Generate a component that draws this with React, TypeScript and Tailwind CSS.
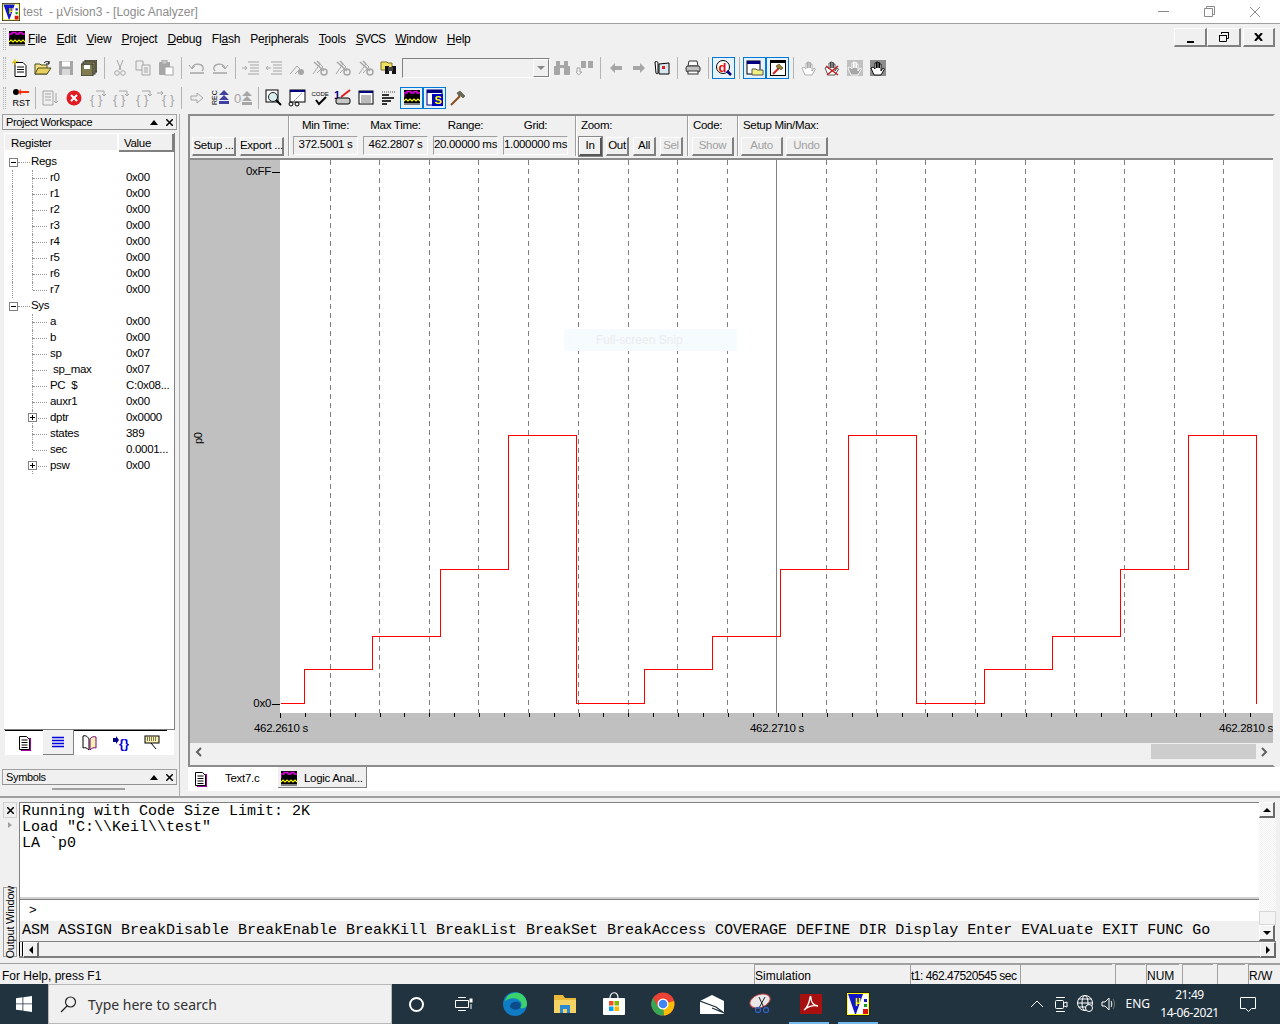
import React from 'react';

const G = '#a6a6a6';

const LaIcon = ({ size = 16 }: { size?: number }) => (
  <svg width={size} height={size} viewBox="0 0 16 16">
    <rect x="0" y="0" width="16" height="15" fill="#000" />
    <path d="M0 6V2h3V0.5h4V2h3V.5h3V2h3" transform="translate(0 1)" fill="none" stroke="#e000e0" strokeWidth="1.4" />
    <path d="M0 11l2-2 2 2 2-2 2 2 2-2 2 2 2-2 2 2" fill="none" stroke="#ffff00" strokeWidth="1.2" />
    <rect x="0" y="13.5" width="16" height="1" fill="#fff" />
  </svg>
);

const SymIcon = () => (
  <svg width="18" height="18" viewBox="0 0 18 18">
    <rect x="1" y="1" width="15" height="15" fill="#fff" stroke="#000080" />
    <rect x="1" y="1" width="15" height="3" fill="#000080" />
    <rect x="6" y="5" width="11" height="12" fill="#0000c0" />
    <text x="8.5" y="15" fontSize="11" fontWeight="700" fill="#ffff00" fontFamily="Liberation Sans">S</text>
  </svg>
);

const Hammer = () => (
  <svg width="18" height="18" viewBox="0 0 18 18">
    <path d="M2 16L11 7" stroke="#8a4b1a" strokeWidth="2" />
    <path d="M8 4l3-2 5 5-2 2-3-3-1 1z" fill="#6b6b4f" stroke="#333" strokeWidth=".5" />
  </svg>
);

const Doc = () => (
  <svg width="16" height="17" viewBox="0 0 16 17">
    <path d="M4 3h10v13H4z" fill="#a000a0" />
    <path d="M2.500 1.500h7l3 3v10h-10z" fill="#fff" stroke="#000" />
    <path d="M4.500 5h6M4.500 7.500h6M4.500 10h6M4.500 12.500h6" stroke="#000" />
  </svg>
);

const Floppy = ({ c = G, window: w = '#fff' }: { c?: string; window?: string }) => (
  <svg width="16" height="16" viewBox="0 0 16 16">
    <rect x="1" y="1" width="14" height="14" fill={c} />
    <rect x="4" y="1.500" width="8" height="5" fill={w} />
    <rect x="4" y="9" width="8" height="6" fill="#d8d8d8" />
  </svg>
);

const Lines = ({ arrow }: { arrow: 'r' | 'l' }) => (
  <svg width="18" height="16" viewBox="0 0 18 16">
    <path d="M6 2h11M8 5h9M8 8h9M8 11h9M6 14h11" stroke={G} />
    <path d={arrow === 'r' ? 'M0 8h5M3 6l2 2-2 2' : 'M6 8H1M3 6L1 8l2 2'} stroke={G} fill="none" />
  </svg>
);

const Mark = () => (
  <svg width="18" height="18" viewBox="0 0 18 18">
    <path d="M2 15L9 5l3 3-6 6" fill="none" stroke={G} />
    <circle cx="13" cy="13" r="3" fill="none" stroke={G} strokeWidth="1.500" />
    <path d="M6 2l3 3M3 3l10 9" stroke={G} strokeWidth="1.500" />
  </svg>
);

const Arc = ({ flip }: { flip?: boolean }) => (
  <svg width="18" height="16" viewBox="0 0 18 16" className={flip ? '-scale-x-100' : ''}>
    <path d="M4 8c2-5 9-5 11-1 1 2 0 3-1 4" fill="none" stroke={G} strokeWidth="1.300" />
    <path d="M1 5l3 4 3-3" fill="none" stroke={G} />
    <path d="M2 13h14" stroke={G} strokeWidth="1.500" />
  </svg>
);

const Brace = ({ pre, post }: { pre?: boolean; post?: boolean }) => (
  <svg width="18" height="18" viewBox="0 0 18 18">
    <text x={pre ? 5 : 2} y="15" fontSize="13" fill={G} fontFamily="Liberation Sans">{'{ }'}</text>
    {pre && <path d="M0 4h6M4 2l2 2-2 2" stroke={G} fill="none" />}
    {post && <path d="M8 2h8v5M14 5l2 2 2-2" stroke={G} fill="none" />}
  </svg>
);

const Hand = ({ c = '#000', fill = '#fff', bg, x }: { c?: string; fill?: string; bg?: string; x?: boolean }) => (
  <svg width="16" height="16" viewBox="0 0 16 16">
    {bg && <rect width="16" height="16" fill={bg} />}
    <path d="M4 15L1 8l2-1 2 2V3h1.500v5-6H8v6-5.500h1.500V8V4H11v7l2-3 1.500 1L11 15z" fill={fill} stroke={c} strokeWidth=".9" />
    {x && <path d="M2 6l12 9M14 6L3 15" stroke="#c02020" strokeWidth="1.500" />}
  </svg>
);

const toolbarIcons: Record<string, React.ReactNode> = {
  fresh: (
    <svg width="16" height="18" viewBox="0 0 16 18">
      <path d="M3 3.500h8l3 3v11H3z" fill="#fff" stroke="#000" />
      <path d="M5 8h7M5 10.500h7M5 13h7" stroke="#000" />
      <path d="M1 2l3 2M3 0v6M0 4l6-2" stroke="#e0c000" />
    </svg>
  ),
  open: (
    <svg width="18" height="16" viewBox="0 0 18 16">
      <path d="M1 14V4h5l1 1h6v9z" fill="#f0e080" stroke="#4a4a20" />
      <path d="M1 14l3-6h13l-4 6z" fill="#e8d060" stroke="#4a4a20" />
      <path d="M10 3c2-2 4-2 5 0M15 1v3h-3" fill="none" stroke="#000" />
    </svg>
  ),
  save: <Floppy />,
  saveAll: (
    <svg width="16" height="16" viewBox="0 0 16 16">
      <rect x="4" y="0" width="12" height="12" fill="#807c50" stroke="#333" />
      <rect x="2" y="2" width="12" height="12" fill="#9c9860" stroke="#333" />
      <rect x="0" y="4" width="12" height="12" fill="#807c50" stroke="#333" />
      <rect x="3" y="5" width="6" height="4" fill="#fff" />
    </svg>
  ),
  cut: (
    <svg width="14" height="16" viewBox="0 0 14 16">
      <path d="M4 0l4 10M10 0L6 10" stroke={G} />
      <circle cx="4" cy="13" r="2.300" fill="none" stroke={G} />
      <circle cx="10" cy="13" r="2.300" fill="none" stroke={G} />
    </svg>
  ),
  copy: (
    <svg width="16" height="16" viewBox="0 0 16 16">
      <path d="M1 1h7v9H1z" fill="#eee" stroke={G} />
      <path d="M7 5h8v10H7z" fill="#eee" stroke={G} />
      <path d="M9 8h4M9 10h4M9 12h4" stroke={G} />
    </svg>
  ),
  paste: (
    <svg width="16" height="16" viewBox="0 0 16 16">
      <rect x="1" y="2" width="11" height="13" rx="1" fill={G} />
      <rect x="4" y="0" width="5" height="4" fill="#c8c8c8" stroke={G} />
      <rect x="7" y="7" width="8" height="8" fill="#fff" stroke={G} />
    </svg>
  ),
  undo: <Arc />,
  redo: <Arc flip />,
  indent: <Lines arrow="r" />,
  outdent: <Lines arrow="l" />,
  mark: (
    <svg width="16" height="16" viewBox="0 0 16 16">
      <path d="M1 14L8 6l3 3-5 5" fill="none" stroke={G} />
      <circle cx="12" cy="12" r="3" fill={G} />
    </svg>
  ),
  markNext: <Mark />,
  markPrev: <Mark />,
  markClear: <Mark />,
  findFiles: (
    <svg width="18" height="16" viewBox="0 0 18 16">
      <path d="M1 2h6l1 1h4v7H1z" fill="#f0e060" stroke="#807020" />
      <rect x="5" y="6" width="4" height="8" fill="#111" />
      <rect x="12" y="6" width="4" height="8" fill="#111" />
      <rect x="8" y="7" width="5" height="4" fill="#444" />
    </svg>
  ),
  binoculars: (
    <svg width="18" height="16" viewBox="0 0 18 16">
      <rect x="1" y="6" width="6" height="9" rx="1" fill={G} />
      <rect x="11" y="6" width="6" height="9" rx="1" fill={G} />
      <rect x="3" y="1" width="4" height="6" fill={G} />
      <rect x="11" y="1" width="4" height="6" fill={G} />
      <rect x="7" y="5" width="4" height="3" fill={G} />
    </svg>
  ),
  binocularsDown: (
    <svg width="18" height="16" viewBox="0 0 18 16">
      <rect x="5" y="1" width="5" height="7" fill={G} />
      <rect x="12" y="1" width="5" height="7" fill={G} />
      <path d="M1 8h3v4h2l-3.500 3L0 12h1z" fill="none" stroke={G} />
    </svg>
  ),
  left: <svg width="14" height="12" viewBox="0 0 14 12"><path d="M6 1L1 6l5 5V8h7V4H6z" fill={G} /></svg>,
  right: <svg width="14" height="12" viewBox="0 0 14 12"><path d="M8 1l5 5-5 5V8H1V4h7z" fill={G} /></svg>,
  book: (
    <svg width="16" height="16" viewBox="0 0 16 16">
      <path d="M1 2c2-1 3 0 3 1v10c0 1-2 1-2 0z" fill="#fff" stroke="#000" />
      <path d="M5 4l10-1v11H5z" fill="#d8e8f0" stroke="#000" />
      <rect x="8" y="6" width="3" height="3" fill="#e02020" />
    </svg>
  ),
  print: (
    <svg width="16" height="16" viewBox="0 0 16 16">
      <path d="M4 1h8l1 5H3z" fill="#fff" stroke="#333" />
      <rect x="1" y="6" width="14" height="6" rx="2" fill="#c0c0c0" stroke="#333" />
      <rect x="3" y="11" width="10" height="3" fill="#fff" stroke="#333" />
    </svg>
  ),
  debug: (
    <svg width="18" height="18" viewBox="0 0 18 18">
      <circle cx="8" cy="8" r="6.500" fill="#fff" stroke="#000" />
      <text x="3.500" y="13" fontSize="13" fontWeight="700" fill="#e01010" fontFamily="Liberation Sans">d</text>
      <path d="M12 12l4 4" stroke="#000080" strokeWidth="2.500" />
    </svg>
  ),
  project: (
    <svg width="18" height="16" viewBox="0 0 18 16">
      <rect x="1" y="1" width="13" height="13" fill="#fff" stroke="#000" />
      <rect x="1" y="1" width="13" height="3" fill="#000080" />
      <path d="M6 9h4l1 1h6v5H6z" fill="#f0f080" stroke="#555" />
    </svg>
  ),
  build: (
    <svg width="16" height="16" viewBox="0 0 16 16">
      <rect x=".5" y=".5" width="15" height="15" fill="#fff" stroke="#000" />
      <rect x="0" y="0" width="16" height="3" fill="#000" />
      <path d="M3 14l6-6" stroke="#e02020" strokeWidth="2" />
      <path d="M6 6l3-2 4 4-2 2-2-2-1 1z" fill="#a08830" stroke="#222" strokeWidth=".5" />
    </svg>
  ),
  hand: <Hand c={G} />,
  handOff: <Hand c="#444" x />,
  handGray: <Hand c="#fff" fill={G} bg="#c0c0c0" />,
  handDark: <Hand bg="#8c8c8c" />,
  rst: (
    <svg width="18" height="20" viewBox="0 0 18 20">
      <circle cx="4" cy="4" r="3" fill="#000" />
      <path d="M17 3H9V1L6 4l3 3V5h8z" fill="#ff3010" />
      <text x="0.500" y="18" fontSize="9" fill="#000" fontFamily="Liberation Sans">RST</text>
    </svg>
  ),
  docDown: (
    <svg width="18" height="16" viewBox="0 0 18 16">
      <path d="M1 1h10v14H1z" fill="#eee" stroke={G} />
      <path d="M3 4h6M3 7h6M3 10h6" stroke={G} />
      <path d="M14 3v10M12 11l2 2 2-2" stroke={G} fill="none" />
    </svg>
  ),
  stop: (
    <svg width="16" height="16" viewBox="0 0 16 16">
      <circle cx="8" cy="8" r="7.500" fill="#e01b24" />
      <path d="M5 5l6 6M11 5l-6 6" stroke="#fff" strokeWidth="2" />
    </svg>
  ),
  stepIn: <Brace post />,
  stepOver: <Brace post />,
  stepOut: <Brace post />,
  runTo: <Brace pre />,
  showNext: <svg width="14" height="12" viewBox="0 0 14 12"><path d="M7 1l6 5-6 5V8H1V4h6z" fill="#eee" stroke={G} /></svg>,
  rec: (
    <svg width="18" height="18" viewBox="0 0 18 18">
      <text x="-16" y="6" fontSize="7" transform="rotate(-90)" fill="#000" fontFamily="Liberation Sans">REC</text>
      <path d="M13 1l5 5H8zM13 6l5 5H8z" fill="#4040a0" />
      <path d="M8 12h10v3H8z" fill="#4040a0" />
    </svg>
  ),
  recOff: (
    <svg width="18" height="16" viewBox="0 0 18 16">
      <text x="0" y="13" fontSize="13" fill={G} fontFamily="Liberation Sans">0</text>
      <path d="M13 1l5 5H8zM13 6l5 5H8z" fill={G} />
      <path d="M8 12h10v3H8z" fill={G} />
    </svg>
  ),
  cmdWin: (
    <svg width="18" height="18" viewBox="0 0 18 18">
      <rect x="1" y="1" width="12" height="12" fill="#fff" stroke="#000" />
      <circle cx="8" cy="8" r="4.500" fill="#d8f0f0" stroke="#202020" />
      <path d="M11 11l5 5" stroke="#000" strokeWidth="2" />
    </svg>
  ),
  dasm: (
    <svg width="18" height="18" viewBox="0 0 18 18">
      <rect x="2" y="1" width="15" height="12" fill="#fff" stroke="#000" />
      <rect x="2" y="1" width="15" height="2" fill="#000080" />
      <path d="M6 12l8-8" stroke="#888" strokeDasharray="2 1" />
      <circle cx="3" cy="15" r="2" fill="none" stroke="#000" />
      <circle cx="9" cy="15" r="2" fill="none" stroke="#000" />
    </svg>
  ),
  code: (
    <svg width="18" height="18" viewBox="0 0 18 18">
      <text x="0.500" y="7" fontSize="6" fill="#000" fontFamily="Liberation Sans">CODE</text>
      <path d="M5 11l3 4 7-7" fill="none" stroke="#000" strokeWidth="2" />
    </svg>
  ),
  one: (
    <svg width="18" height="18" viewBox="0 0 18 18">
      <text x="0" y="10" fontSize="11" fontWeight="700" fill="#000080" fontFamily="Liberation Sans">1</text>
      <path d="M16 1L7 8" stroke="#e02020" strokeWidth="2" />
      <rect x="2" y="9" width="14" height="6" rx="2" fill="#c8c8c8" stroke="#000" />
    </svg>
  ),
  grid: (
    <svg width="16" height="16" viewBox="0 0 16 16">
      <rect x="1" y="1" width="14" height="13" fill="#fff" stroke="#000" />
      <rect x="1" y="1" width="14" height="2" fill="#000080" />
      <path d="M3 6h10M3 8h10M3 10h10M3 12h10" stroke="#777" />
    </svg>
  ),
  bars: (
    <svg width="16" height="16" viewBox="0 0 16 16">
      <path d="M1 2h14" stroke="#444" strokeDasharray="1 1" />
      <path d="M1 5h7M1 8h12M1 11h9M1 14h5" stroke="#333" strokeWidth="2" />
    </svg>
  ),
  la: <LaIcon />,
  sym: <SymIcon />,
  hammer: <Hammer />,
};

const Sep = ({ w = 'w-2' }: { w?: string }) => (
  <div className={`${w} h-[22px] flex justify-center shrink-0`}>
    <div className="w-px h-full bg-[#b4b4b4]" />
  </div>
);

const Tool = ({ name, on }: { name: string; on?: boolean }) => (
  <div className={`w-[23px] h-[22px] shrink-0 flex items-center justify-center ${on ? 'border border-[#0078d7] bg-[#e5f1fb]' : ''}`}>
    {toolbarIcons[name]}
  </div>
);

const Grip = () => <div className="w-[3px] h-[22px] shrink-0 border-x border-dotted border-[#b0b0b0]" />;

const Btn = ({ children, w, off, down }: { children: React.ReactNode; w: string; off?: boolean; down?: boolean }) => (
  <div className={`${w} h-[19px] shrink-0 flex items-center justify-center whitespace-nowrap border-t border-l border-t-white border-l-white ${down ? 'border-b-2 border-r-2 border-b-[#555] border-r-[#555] outline outline-[#888]' : 'border-b-2 border-r-2 border-b-[#808080] border-r-[#808080]'} ${off ? 'text-[#a0a0a0]' : ''}`}>
    {children}
  </div>
);

const TimeBox = ({ label, value }: { label: string; value: string }) => (
  <div className="w-[65px] flex flex-col items-center shrink-0">
    <div className="h-[20px] leading-[18px]">{label}</div>
    <div className="w-full h-[19px] pb-px flex items-center justify-center border border-[#a0a0a0] border-b-white border-r-white whitespace-nowrap">{value}</div>
  </div>
);

const VLine = ({ className }: { className: string }) => <div className={`w-[2px] h-[40px] shrink-0 bg-[#fff] border-l border-l-[#a0a0a0] ${className}`} />;

type Row = { name: string; value: string; top?: boolean; plus?: boolean; pad?: boolean };
const rows: Row[] = [
  { name: 'Regs', value: '', top: true },
  ...['r0', 'r1', 'r2', 'r3', 'r4', 'r5', 'r6', 'r7'].map((name) => ({ name, value: '0x00' })),
  { name: 'Sys', value: '', top: true },
  { name: 'a', value: '0x00' },
  { name: 'b', value: '0x00' },
  { name: 'sp', value: '0x07' },
  { name: 'sp_max', value: '0x07', pad: true },
  { name: 'PC  $', value: 'C:0x08...' },
  { name: 'auxr1', value: '0x00' },
  { name: 'dptr', value: '0x0000', plus: true },
  { name: 'states', value: '389' },
  { name: 'sec', value: '0.0001...' },
  { name: 'psw', value: '0x00', plus: true },
];

const TreeBox = ({ plus }: { plus?: boolean }) => (
  <div className="w-[9px] h-[9px] border border-[#808080] bg-white flex items-center justify-center relative shrink-0">
    <div className="w-[5px] h-px bg-black" />
    {plus && <div className="absolute w-px h-[5px] bg-black" />}
  </div>
);

const TreeRow = ({ row, index }: { row: Row; index: number }) => {
  if (row.top) {
    return (
      <div className="flex h-4 items-center pl-[5px]">
        <TreeBox />
        <div className="w-[12px] border-t border-dotted border-[#999]" />
        <span className="ml-[1px]">{row.name}</span>
      </div>
    );
  }
  const lastInGroup = index === 8;
  return (
    <div className="flex h-4 items-center">
      <div className={`ml-[8px] w-[20px] border-l border-dotted border-[#999] shrink-0 ${index < 9 ? 'h-full' : 'h-0'}`} />
      <div className="relative w-[15px] h-full shrink-0 flex items-center">
        <div className="w-full ml-[1px] border-t border-dotted border-[#999]" />
        <div className="absolute left-0 top-0 h-1/2 border-l border-dotted border-[#999]" />
        {!lastInGroup && index !== 18 && <div className="absolute left-0 top-1/2 h-1/2 border-l border-dotted border-[#999]" />}
        {row.plus && <div className="absolute left-[-4px] top-[3px]"><TreeBox plus /></div>}
      </div>
      <span className={`ml-[3px] w-[76px] shrink-0 whitespace-pre ${row.pad ? 'pl-[3px]' : ''}`}>{row.name}</span>
      <span className="whitespace-nowrap">{row.value}</span>
    </div>
  );
};

const Logo = ({ size }: { size: number }) => (
  <svg width={size} height={size} viewBox="0 0 24 24">
    <rect x="0.500" y="0.500" width="23" height="23" fill="#ffff00" stroke="#222" />
    <rect x="2" y="2" width="20" height="20" fill="#fff" />
    <path d="M2 2h15l-7 20H9z" fill="#1414c8" />
    <text x="9" y="12" fontSize="10" fontWeight="700" fill="#ffff00" fontFamily="Liberation Sans">µ</text>
    <rect x="18" y="7" width="3" height="3" fill="#1414c8" />
    <rect x="18" y="12" width="3" height="3" fill="#10a010" />
    <rect x="17" y="17" width="5" height="5" fill="#e01010" />
  </svg>
);

// x of the dashed grid, counted from the left edge of the plot
const GRID_X = [50, 99, 149, 198, 248, 298, 348, 397, 447, 546, 596, 645, 695, 745, 794, 844, 894, 943];
const WAVE = [
  [0, 543], [24, 543], [24, 509], [92, 509], [92, 476], [160, 476], [160, 409], [228, 409], [228, 275], [296, 275],
  [296, 543], [364, 543], [364, 509], [432, 509], [432, 476], [500, 476], [500, 409], [568, 409], [568, 275], [636, 275],
  [636, 543], [704, 543], [704, 509], [772, 509], [772, 476], [840, 476], [840, 409], [908, 409], [908, 275], [976, 275],
  [976, 543],
].map(([x, y]) => `${x + 0.5},${y + 0.5}`).join(' ');
const TICKS = Array.from({ length: 41 }, (_, i) => Math.round(i * 24.875));

const Chart = () => (
  <div className="relative h-[583px] w-[1083px] bg-[#c0c0c0] flex flex-col overflow-hidden shrink-0 text-[11.5px] tracking-[-0.3px]">
    <div className="h-[553px] flex">
      <div className="w-[90px] shrink-0 flex flex-col justify-between items-stretch pt-[4px] pb-[1px]">
        <div className="h-4 flex items-center justify-end">0xFF<span className="ml-[1px] w-2 h-px bg-black" /></div>
        <div className="h-4 flex items-center pl-[2px]"><span className="-rotate-90 text-[11px]">p0</span></div>
        <div className="h-4 flex items-center justify-end">0x0<span className="ml-[1px] w-2 h-px bg-black" /></div>
      </div>
      <svg width="993" height="553" className="bg-white shrink-0">
        {GRID_X.map((x) => (
          <line key={x} x1={x + 0.5} x2={x + 0.5} y1="0" y2="553" stroke="#808080" strokeDasharray="5 4" />
        ))}
        <line x1="496.500" x2="496.500" y1="0" y2="553" stroke="#808080" />
        <polyline points={WAVE} fill="none" stroke="#ff0000" strokeWidth="1" shapeRendering="crispEdges" />
      </svg>
    </div>
    <svg width="993" height="5" className="ml-[90px] shrink-0">
      {TICKS.map((x) => (
        <line key={x} x1={x + 0.5} x2={x + 0.5} y1="0" y2={x === 0 || x === 497 ? 5 : 4} stroke="#000" />
      ))}
    </svg>
    <div className="flex h-[25px] items-start pl-[64px] whitespace-nowrap leading-[20px]">
      <span className="w-[53px]">462.2610 s</span>
      <span className="ml-[443px] w-[53px]">462.2710 s</span>
      <span className="ml-auto">462.2810 s</span>
    </div>
    <div className="absolute left-[374px] top-[169px] w-[173px] h-[22px] bg-[#f5fbff] pl-[32px] leading-[22px] text-[#ececec] text-[12px] tracking-normal">Full-screen Snip</div>
  </div>
);

const menus: [string, string, string][] = [
  ['', 'F', 'ile'],
  ['', 'E', 'dit'],
  ['', 'V', 'iew'],
  ['', 'P', 'roject'],
  ['', 'D', 'ebug'],
  ['Fl', 'a', 'sh'],
  ['Pe', 'r', 'ipherals'],
  ['', 'T', 'ools'],
  ['', 'S', 'VCS'],
  ['', 'W', 'indow'],
  ['', 'H', 'elp'],
];

const PanelTitle = ({ title }: { title: string }) => (
  <div className="h-[16px] shrink-0 mx-[2px] border border-[#a0a0a0] border-b-[#909090] flex items-center pl-[3px] pr-[2px] text-[11px] tracking-[-0.35px]">
    <span className="flex-1">{title}</span>
    <svg width="8" height="5" viewBox="0 0 8 5" className="mr-[8px]"><path d="M4 0l4 5H0z" fill="#000" /></svg>
    <svg width="7" height="7" viewBox="0 0 7 7" className="mr-[1px]"><path d="M0 0l7 7M7 0L0 7" stroke="#000" strokeWidth="1.500" /></svg>
  </div>
);

const commands =
  'ASM ASSIGN BreakDisable BreakEnable BreakKill BreakList BreakSet BreakAccess COVERAGE DEFINE DIR Display Enter EVALuate EXIT FUNC Go';

const ScrollBtn = ({ d, className = '' }: { d: string; className?: string }) => (
  <div className={`w-[16px] h-[16px] shrink-0 flex items-center justify-center border-t border-l border-t-white border-l-white border-b-2 border-r-2 border-b-[#696969] border-r-[#696969] ${className}`}>
    <svg width="8" height="8" viewBox="0 0 8 8"><path d={d} fill="#000" /></svg>
  </div>
);

const StatusPane = ({ w, children }: { w: string; children?: React.ReactNode }) => (
  <div className={`${w} h-[20px] shrink-0 border-t border-l border-[#a0a0a0] leading-[22px] whitespace-nowrap overflow-hidden`}>{children}</div>
);

const App: React.FC = () => {
  return (
    <div className="w-[1280px] h-[1024px] flex flex-col bg-[#f0f0f0] text-black text-[12px] overflow-hidden font-['Liberation_Sans',sans-serif]">
      {/* Title bar */}
      <div className="h-[24px] shrink-0 bg-white border-b border-[#a0a0a0] flex items-center">
        <div className="ml-[2px] w-[20px]"><Logo size={18} /></div>
        <div className="ml-[1px] text-[#8c8c8c] whitespace-pre">test  - µVision3 - [Logic Analyzer]</div>
        <div className="ml-auto flex items-center text-[#888]">
          <div className="w-[11px] h-px bg-[#8a8a8a] mr-[35px]" />
          <svg width="11" height="11" viewBox="0 0 11 11" className="mr-[34px]"><path d="M2.500 2.500v-2h8v8h-2M.5 2.500h8v8h-8z" fill="none" stroke="#8a8a8a" /></svg>
          <svg width="12" height="12" viewBox="0 0 12 12" className="mr-[19px]"><path d="M1 1l10 10M11 1L1 11" stroke="#8a8a8a" /></svg>
        </div>
      </div>

      {/* Menu */}
      <div className="h-[29px] shrink-0 flex items-center pl-[3px] pt-[1px]">
        <Grip />
        <div className="ml-[3px] mr-[3px]"><LaIcon /></div>
        <div className="flex gap-[10px] tracking-[-0.2px]">
          {menus.map(([a, u, b]) => (
            <span key={u + b} className={b === 'VCS' ? 'tracking-[-0.8px]' : ''}>{a}<span className="underline">{u}</span>{b}</span>
          ))}
        </div>
        <div className="ml-auto flex mr-[5px] items-center mb-[3px]">
          <Btn w="w-[33px]"><span className="w-[7px] h-[2px] bg-black mt-[9px]" /></Btn>
          <Btn w="w-[34px]">
            <svg width="12" height="12" viewBox="0 0 12 12"><path d="M3.500 3V1.500h7v6H8M1.500 4.500h7v6h-7z" fill="none" stroke="#000" /><path d="M3 1.500h8M1 4.500h8" stroke="#000" /></svg>
          </Btn>
          <div className="w-[2px]" />
          <Btn w="w-[32px]">
            <svg width="9" height="8" viewBox="0 0 9 8"><path d="M1 0l7 8M8 0L1 8" stroke="#000" strokeWidth="2" /></svg>
          </Btn>
        </div>
      </div>

      {/* Toolbars */}
      <div className="h-[30px] shrink-0 flex items-center pl-[3px]">
        <Grip />
        <div className="w-[2px]" />
        {['fresh', 'open', 'save', 'saveAll'].map((n) => <Tool key={n} name={n} />)}
        <Sep />
        {['cut', 'copy', 'paste'].map((n) => <Tool key={n} name={n} />)}
        <Sep />
        {['undo', 'redo'].map((n) => <Tool key={n} name={n} />)}
        <Sep />
        {['indent', 'outdent', 'mark', 'markNext', 'markPrev', 'markClear', 'findFiles'].map((n) => <Tool key={n} name={n} />)}
        <div className="ml-[2px] w-[148px] h-[20px] shrink-0 border border-[#808080] border-b-white border-r-white flex justify-end bg-[#f0f0f0]">
          <div className="w-[16px] h-[18px] border-t border-l border-white border-b border-r border-b-[#808080] border-r-[#808080] flex items-center justify-center">
            <svg width="8" height="4" viewBox="0 0 8 4"><path d="M0 0h8L4 4z" fill="#888" /></svg>
          </div>
        </div>
        {['binoculars', 'binocularsDown'].map((n) => <Tool key={n} name={n} />)}
        <Sep />
        {['left', 'right', 'book'].map((n) => <Tool key={n} name={n} />)}
        <Sep />
        <Tool name="print" />
        <Sep />
        <Tool name="debug" on />
        <Sep />
        <Tool name="project" on />
        <Tool name="build" on />
        <Sep />
        {['hand', 'handOff', 'handGray', 'handDark'].map((n) => <Tool key={n} name={n} />)}
      </div>
      <div className="h-[30px] shrink-0 flex items-center pl-[3px]">
        <Grip />
        <div className="w-[3px]" />
        <Tool name="rst" />
        <Sep w="w-[7px]" />
        {['docDown', 'stop', 'stepIn', 'stepOver', 'stepOut', 'runTo'].map((n) => <Tool key={n} name={n} />)}
        <Sep />
        {['showNext', 'rec', 'recOff'].map((n) => <Tool key={n} name={n} />)}
        <Sep />
        {['cmdWin', 'dasm', 'code', 'one', 'grid', 'bars'].map((n) => <Tool key={n} name={n} />)}
        <Tool name="la" on />
        <Tool name="sym" on />
        <Tool name="hammer" />
      </div>
      <div className="h-px shrink-0" />

      {/* Main area */}
      <div className="h-[682px] shrink-0 flex">
        <div className="w-[179px] shrink-0 flex flex-col">
          <PanelTitle title="Project Workspace" />
          <div className="h-[3px] shrink-0" />
          <div className="ml-[4px] w-[171px] h-[597px] shrink-0 flex flex-col border-r border-[#808080] text-[11.5px] tracking-[-0.3px]">
            <div className="h-[19px] flex border-t border-white shrink-0">
              <div className="w-[115px] pl-[6px] border-l border-white border-r-2 border-b-2 border-[#808080] border-l-white leading-[18px]">Register</div>
              <div className="w-[55px] pl-[5px] border-r-2 border-b-2 border-[#808080] leading-[18px]">Value</div>
            </div>
            <div className="bg-white h-[578px] pt-[2px] border-b border-[#808080] overflow-hidden">
              {rows.map((r, i) => <TreeRow key={r.name} row={r} index={i} />)}
            </div>
          </div>
          <div className="ml-[5px] w-[169px] h-[25px] shrink-0 bg-white flex items-center text-[0px]">
            <div className="w-[38px] h-full border-t border-black flex items-center justify-center pl-[2px]"><Doc /></div>
            <div className="w-[31px] h-full bg-[#f0f0f0] border-r border-b border-[#808080] flex items-center justify-center">
              <svg width="14" height="12" viewBox="0 0 14 12"><path d="M1 1.500h12M1 4.500h12M1 7.500h12M1 10.500h12" stroke="#0000e0" strokeWidth="1.500" /></svg>
            </div>
            {[
              <svg key="b" width="16" height="16" viewBox="0 0 16 16"><path d="M1 1c3-1 5 1 6 3v11c-2-2-4-3-6-2z" fill="#fff" stroke="#000" /><path d="M8 4c1-2 4-3 6-2v11c-2-1-4 0-6 2z" fill="#f8f0b0" stroke="#800080" /></svg>,
              <svg key="f" width="16" height="16" viewBox="0 0 16 16"><path d="M0 3h3V1l3 4-3 4V7H0z" fill="#000080" /><text x="6" y="13" fontSize="13" fontWeight="700" fill="#0000e0" fontFamily="Liberation Sans">{'{}'}</text></svg>,
              <svg key="t" width="16" height="16" viewBox="0 0 16 16"><rect x="1" y="1" width="14" height="7" fill="#f8f0b0" stroke="#000" /><path d="M3 3h10M3 5h10" stroke="#000" strokeDasharray="1 1" /><path d="M7 8l5 6" stroke="#000" /></svg>,
            ].map((icon, i) => (
              <div key={i} className="w-[31px] h-full border-t border-black flex items-center justify-center">{icon}</div>
            ))}
          </div>
          <div className="h-[14px] shrink-0" />
          <PanelTitle title="Symbols" />
          <div className="h-[3px] shrink-0" />
          <div className="ml-[52px] w-[73px] h-[2px] shrink-0 bg-[#a0a0a0]" />
        </div>
        <div className="w-[9px] shrink-0 border-l border-[#b0b0b0]" />
        <div className="flex-1 flex flex-col min-w-0">
          <div className="h-[653px] shrink-0 w-[1087px] border-2 border-[#8c8c8c] border-r-[#f0f0f0] flex flex-col">
            <div className="h-[44px] shrink-0 flex items-start pl-[2px] border-b-2 border-[#8c8c8c] text-[11.5px] tracking-[-0.3px]">
              <div className="flex gap-[4px] mt-[21px]">
                <Btn w="w-[44px]">Setup ...</Btn>
                <Btn w="w-[44px]">Export ...</Btn>
              </div>
              <VLine className="ml-[4px] mr-[3px]" />
              <div className="flex gap-[5px]">
                <TimeBox label="Min Time:" value="372.5001 s" />
                <TimeBox label="Max Time:" value="462.2807 s" />
                <TimeBox label="Range:" value="20.00000 ms" />
                <TimeBox label="Grid:" value="1.000000 ms" />
              </div>
              <VLine className="ml-[7px] mr-[2px]" />
              <div className="flex flex-col w-[105px] shrink-0">
                <div className="h-[21px] pl-[2px] leading-[18px]">Zoom:</div>
                <div className="flex gap-[4px]">
                  <Btn w="w-[23px]" down>In</Btn>
                  <Btn w="w-[23px]">Out</Btn>
                  <Btn w="w-[23px]">All</Btn>
                  <Btn w="w-[23px]" off>Sel</Btn>
                </div>
              </div>
              <VLine className="ml-[3px] mr-[3px]" />
              <div className="flex flex-col w-[42px] shrink-0">
                <div className="h-[21px] pl-px leading-[18px]">Code:</div>
                <Btn w="w-[42px]" off>Show</Btn>
              </div>
              <VLine className="ml-[3px] mr-[2px]" />
              <div className="flex flex-col shrink-0">
                <div className="h-[21px] pl-[2px] leading-[18px]">Setup Min/Max:</div>
                <div className="flex gap-[3px]">
                  <Btn w="w-[42px]" off>Auto</Btn>
                  <Btn w="w-[42px]" off>Undo</Btn>
                </div>
              </div>
            </div>
            <Chart />
            <div className="h-[17px] shrink-0 flex items-center relative w-[1083px]">
              <svg width="8" height="10" viewBox="0 0 8 10" className="ml-[5px]"><path d="M6 1L2 5l4 4" fill="none" stroke="#606060" strokeWidth="2" /></svg>
              <div className="absolute left-[961px] top-px w-[105px] h-[15px] bg-[#cdcdcd]" />
              <svg width="8" height="10" viewBox="0 0 8 10" className="ml-auto mr-[5px]"><path d="M2 1l4 4-4 4" fill="none" stroke="#606060" strokeWidth="2" /></svg>
            </div>
          </div>
          <div className="h-[24px] shrink-0 flex bg-white items-start text-[11.5px] tracking-[-0.3px]">
            <div className="w-[90px] h-[21px] pt-[3px] flex items-center pl-[5px]">
              <Doc />
              <span className="ml-[16px]">Text7.c</span>
            </div>
            <div className="w-[89px] h-[21px] pt-[3px] flex items-center bg-[#f0f0f0] border-r border-b border-[#808080] whitespace-nowrap pl-[3px]">
              <LaIcon />
              <span className="ml-[7px]">Logic Anal...</span>
            </div>
          </div>
        </div>
      </div>

      {/* Output window */}
      <div className="h-[168px] shrink-0 flex flex-col border-t-2 border-[#a0a0a0]">
        <div className="flex-1 flex pt-[4px] min-h-0">
          <div className="w-[19px] shrink-0 flex flex-col items-center pl-[1px]">
            <div className="h-[16px] w-[14px] border border-[#d0d0d0] flex items-center justify-center">
              <svg width="7" height="7" viewBox="0 0 7 7"><path d="M0 0l7 7M7 0L0 7" stroke="#000" strokeWidth="1.500" /></svg>
            </div>
            <svg width="4" height="6" viewBox="0 0 4 6" className="mt-[4px]"><path d="M0 0l4 3-4 3z" fill="#a0a0a0" /></svg>
            <div className="mt-auto mb-[4px] w-[14px] h-[70px] border border-[#a0a0a0] flex items-center justify-center">
              <span className="-rotate-90 whitespace-nowrap text-[11px] tracking-[-0.2px]">Output Window</span>
            </div>
          </div>
          <div className="flex-1 flex flex-col min-w-0 font-['Liberation_Mono',monospace] text-[15px]">
            <div className="flex h-[139px] shrink-0">
              <div className="w-[1240px] flex flex-col border-t border-l border-[#808080]">
                <div className="h-[96px] bg-white pl-[2px] pt-[1px] leading-[16px] whitespace-pre border-b-2 border-[#d0d0d0]">
                  <div>Running with Code Size Limit: 2K</div>
                  <div>Load "C:\\Keil\\test"</div>
                  <div>LA `p0</div>
                </div>
                <div className="h-[21px] bg-white border-t border-[#808080] pl-[9px] leading-[20px] font-['Liberation_Sans',sans-serif] text-[13px]">&gt;</div>
                <div className="h-[21px] pl-[2px] leading-[20px] whitespace-pre border-t border-white">{commands}</div>
              </div>
              <div className="w-[17px] flex flex-col bg-[#f4f4f4]">
                <ScrollBtn d="M4 2l4 4H0z" />
                <div className="flex-1 bg-[repeating-conic-gradient(#f0f0f0_0_25%,#fff_0_50%)] bg-[length:2px_2px]" />
                <div className="h-[14px] border border-[#d8d8d8]" />
                <ScrollBtn d="M0 2h8L4 6z" />
              </div>
            </div>
            <div className="h-[17px] w-[1257px] shrink-0 flex border-t border-[#808080] border-b-2 border-b-[#808080]">
              <div className="w-[4px] border-x border-black" />
              <ScrollBtn d="M6 0v8L2 4z" />
              <div className="flex-1" />
              <ScrollBtn d="M2 0v8l4-4z" />
            </div>
          </div>
        </div>
        <div className="h-[3px] border-b border-[#a0a0a0]" />
      </div>

      {/* Status bar */}
      <div className="h-[20px] shrink-0 flex overflow-hidden">
        <div className="w-[754px] pl-[2px] leading-[24px]">For Help, press F1</div>
        <StatusPane w="w-[156px]">Simulation</StatusPane>
        <StatusPane w="w-[110px]"><span className="tracking-[-0.5px]">t1: 462.47520545 sec</span></StatusPane>
        <StatusPane w="w-[92px]" />
        <div className="w-[3px]" />
        <StatusPane w="w-[30px]" />
        <div className="w-[1px]" />
        <StatusPane w="w-[33px]">NUM</StatusPane>
        <div className="w-[3px]" />
        <StatusPane w="w-[31px]" />
        <div className="w-[4px]" />
        <StatusPane w="w-[28px]" />
        <div className="w-[3px]" />
        <StatusPane w="w-[32px]">R/W</StatusPane>
      </div>

      {/* Taskbar */}
      <div className="h-[40px] shrink-0 bg-[#20333f] flex items-center text-white font-['Noto_Sans',sans-serif] relative">
        <div className="w-[48px] flex justify-center">
          <svg width="16" height="16" viewBox="0 0 16 16"><path d="M0 2.200L6.500 1.300V7.500H0zM7.300 1.200L16 0V7.500H7.300zM0 8.300H6.500V14.600L0 13.800zM7.300 8.300H16V16L7.300 14.800z" fill="#fff" /></svg>
        </div>
        <div className="w-[344px] h-[40px] bg-[#f0f0f0] border border-[#b8b8b8] flex items-center text-[#333] text-[14px]">
          <svg width="18" height="18" viewBox="0 0 18 18" className="ml-[11px]" fill="none" stroke="#222" strokeWidth="1.200"><circle cx="10.500" cy="7" r="5" /><path d="M7 11l-6 6" /></svg>
          <span className="ml-[10px]">Type here to search</span>
        </div>
        <div className="w-[48px] flex justify-center">
          <div className="w-[15px] h-[15px] rounded-full border-2 border-white" />
        </div>
        <div className="w-[48px] flex justify-center">
          <svg width="18" height="16" viewBox="0 0 18 16" fill="none" stroke="#fff"><path d="M3 1.500h8M3 14.500h8M.5 4.500h13v7H.5z" /><rect x="15" y="3" width="2" height="3" fill="#fff" /><path d="M16 8v5" /></svg>
        </div>
        <div className="w-[53px] flex justify-center">
          <svg width="24" height="24" viewBox="0 0 24 24">
            <circle cx="12" cy="12" r="12" fill="#0f7cc4" />
            <path d="M2 9C4 1 12 0 16 1c5 2 8 6 8 11 0 4-4 5-7 4 2-2 2-5 0-7-3-3-9-4-15 0z" fill="#3bd26b" />
            <path d="M7 15c0-4 4-6 8-5 3 1 3 4 2 6-3 2-6 3-10-1z" fill="#0c4c8c" />
          </svg>
        </div>
        <div className="w-[48px] flex justify-center">
          <svg width="22" height="18" viewBox="0 0 22 18">
            <path d="M0 0h9l2 3h11v15H0z" fill="#e8b93a" />
            <path d="M0 5h22v13H0z" fill="#f5d264" />
            <path d="M6 10h10v8H6z" fill="#2a8bd4" />
            <rect x="9" y="14" width="4" height="4" fill="#f5d264" />
          </svg>
        </div>
        <div className="w-[49px] flex justify-center">
          <svg width="24" height="24" viewBox="0 0 24 24">
            <path d="M8 6c0-7 8-7 8 0" fill="none" stroke="#fff" strokeWidth="1.200" />
            <rect x="1" y="6" width="22" height="17" rx="1" fill="#fff" />
            <rect x="7" y="9" width="4.500" height="4.500" fill="#f25022" />
            <rect x="12.500" y="9" width="4.500" height="4.500" fill="#7fba00" />
            <rect x="7" y="14.500" width="4.500" height="4.500" fill="#00a4ef" />
            <rect x="12.500" y="14.500" width="4.500" height="4.500" fill="#ffb900" />
          </svg>
        </div>
        <div className="w-[49px] flex justify-center">
          <svg width="24" height="24" viewBox="0 0 24 24">
            <circle cx="12" cy="12" r="11.500" fill="#ea4335" />
            <path d="M12 12L2 18a11.500 11.500 0 0 0 11 5.500z" fill="#34a853" />
            <path d="M12 12l11-3a11.500 11.500 0 0 1-10 14.500z" fill="#fbbc05" />
            <path d="M2 6l5 9L2 18a11.500 11.500 0 0 1 0-12z" fill="#34a853" />
            <circle cx="12" cy="12" r="5.500" fill="#fff" />
            <circle cx="12" cy="12" r="4.300" fill="#4285f4" />
          </svg>
        </div>
        <div className="w-[49px] flex justify-center">
          <svg width="24" height="19" viewBox="0 0 24 19">
            <path d="M0 6L12 0l12 6v13H0z" fill="#fff" />
            <path d="M0 6l16 6 8 6-12-5" fill="none" stroke="#20333f" strokeWidth="1.200" />
          </svg>
        </div>
        <div className="w-[50px] flex justify-center">
          <svg width="24" height="22" viewBox="0 0 24 22">
            <ellipse cx="11" cy="8" rx="10.500" ry="6.500" fill="#e8e8e8" stroke="#c04040" transform="rotate(-20 11 8)" />
            <path d="M10 4l5 11M16 4l-6 11" stroke="#222" />
            <circle cx="9" cy="17" r="2.500" fill="none" stroke="#3060c0" strokeWidth="1.300" />
            <circle cx="17" cy="17" r="2.500" fill="none" stroke="#3060c0" strokeWidth="1.300" />
          </svg>
        </div>
        <div className="w-[49px] flex justify-center">
          <svg width="22" height="20" viewBox="0 0 22 20">
            <rect width="22" height="20" rx="1" fill="#a80f0f" />
            <path d="M4 16c3-2 5-7 6-12 0-2 1-2 1 0 0 4 2 7 7 8-5-1-9 0-14 4z" fill="none" stroke="#fff" strokeWidth="1.300" />
          </svg>
        </div>
        <div className="w-[45px] flex justify-center"><Logo size={24} /></div>
        <div className="absolute left-[789px] bottom-0 w-[40px] h-[2px] bg-[#76b9ed]" />
        <div className="absolute left-[838px] bottom-0 w-[40px] h-[2px] bg-[#76b9ed]" />
        <div className="ml-auto flex items-center">
          <svg width="14" height="8" viewBox="0 0 14 8" fill="none" stroke="#fff"><path d="M1 7l6-6 6 6" /></svg>
          <svg width="14" height="17" viewBox="0 0 14 17" fill="none" stroke="#fff" className="ml-[10px]"><path d="M2 1.500h9M2 15.500h9" /><rect x="1.500" y="4.500" width="8" height="8" rx="1" /><path d="M10 7l3-1v5l-3-1" /></svg>
          <svg width="18" height="18" viewBox="0 0 18 18" fill="none" stroke="#fff" className="ml-[8px]"><circle cx="9" cy="8" r="7.500" /><ellipse cx="9" cy="8" rx="3" ry="7.500" /><path d="M1.500 8h15M2.500 4h13M2.500 12h13" /><circle cx="13" cy="13" r="3.500" fill="#20333f" /></svg>
          <svg width="16" height="14" viewBox="0 0 16 14" fill="none" stroke="#fff" className="ml-[7px]"><path d="M1 5h3l4-4v12L4 9H1zM10 4c1 1 1 5 0 6" /><path d="M12 2c2 2 2 8 0 10" stroke="#777" /></svg>
          <span className="ml-[8px] text-[12px]">ENG</span>
          <div className="ml-[4px] w-[71px] flex flex-col items-center leading-[18px] text-[12px] tracking-[-0.4px]">
            <span>21:49</span>
            <span>14-06-2021</span>
          </div>
          <svg width="16" height="15" viewBox="0 0 16 15" fill="none" stroke="#fff" className="ml-[15px] mr-[24px]"><path d="M.5.500h15v11h-4l-3 3-3-3h-5z" /></svg>
        </div>
      </div>
    </div>
  );
};

export default App;
